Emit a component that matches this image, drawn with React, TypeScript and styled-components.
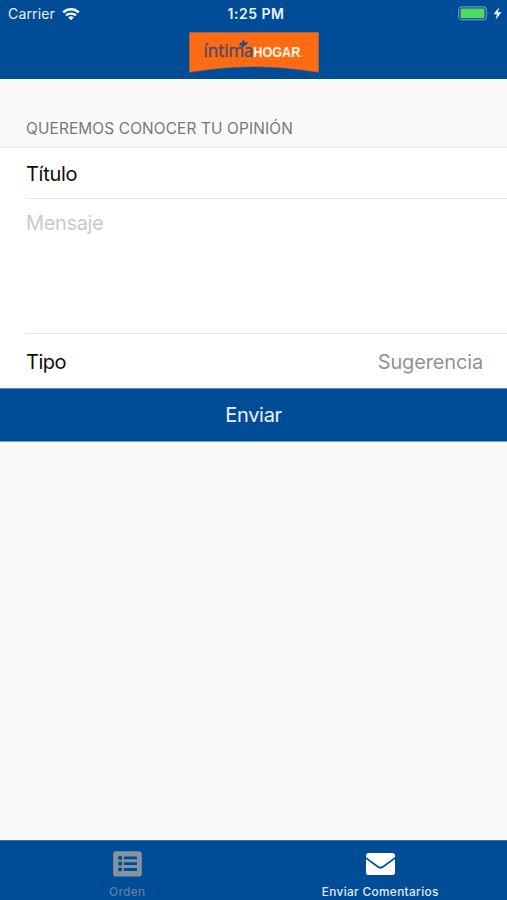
import React from "react";
import styled, { createGlobalStyle } from "styled-components";

const BLUE = "#004c97";

const GlobalStyle = createGlobalStyle`
  *, *::before, *::after { box-sizing: border-box; }
  body {
    margin: 0;
    background: #fafafa;
    font-family: Inter, "Liberation Sans", sans-serif;
    -webkit-font-smoothing: antialiased;
  }
`;

const Screen = styled.div`
  width: 100%;
  height: 900px;
  display: flex;
  flex-direction: column;
  overflow: hidden;
  background: #fafafa;
`;

const Header = styled.header`
  height: 79px;
  flex: none;
  background: ${BLUE};
`;

const StatusBar = styled.div`
  display: grid;
  grid-template-columns: 1fr auto 1fr;
  align-items: center;
  height: 28px;
  padding: 0 5px 0 8px;
  color: #e9f2fc;
  font-size: 14px;
  line-height: 28px;
`;

const Carrier = styled.div`
  display: flex;
  align-items: center;
  gap: 7px;
  letter-spacing: 0.15px;

  svg { margin-top: -1px; }
`;

const Clock = styled.div`
  font-weight: 600;
  letter-spacing: 0.5px;
  padding-left: 2px;
`;

const Power = styled.div`
  display: flex;
  align-items: center;
  justify-content: flex-end;
  gap: 3px;

  svg { margin-top: -2px; }
`;

const LogoRow = styled.div`
  display: flex;
  justify-content: center;
  padding: 4px 0 0 1px;

  svg { display: block; }
`;

const SectionTitle = styled.h2`
  flex: none;
  height: 69px;
  margin: 0;
  padding: 40px 26px 0;
  border-bottom: 1px solid #e9e9ea;
  color: #77777a;
  font-size: 15.4px;
  font-weight: 400;
  line-height: 20px;
  letter-spacing: 0.14px;
`;

const Form = styled.form`
  flex: none;
  background: #fff;
`;

const Row = styled.div<{ $height: number; $last?: boolean }>`
  display: flex;
  justify-content: space-between;
  align-items: center;
  height: ${(p) => p.$height}px;
  margin-left: 26px;
  padding: 2px 24px 0 0;
  border-bottom: ${(p) => (p.$last ? "0" : "1px solid #e6e6e7")};
  font-size: 20px;
  line-height: 26px;
`;

const Label = styled.span<{ $tracking: number }>`
  color: #0c0c0c;
  letter-spacing: ${(p) => p.$tracking}px;
`;

const Value = styled.span`
  color: #929295;
  letter-spacing: -0.15px;
`;

const Message = styled(Row)`
  align-items: flex-start;
  padding-top: 11px;
`;

const Placeholder = styled.span`
  color: #c9c9cc;
  letter-spacing: -0.35px;
`;

const Submit = styled.button`
  display: block;
  width: 100%;
  height: 54px;
  padding: 0;
  border: 0;
  border-top: 1px solid #5a8bbc;
  border-bottom: 1px solid #7ba2ca;
  background: ${BLUE};
  color: #eaf3fd;
  font: 400 20px/52px Inter, "Liberation Sans", sans-serif;
  letter-spacing: -0.3px;
`;

const TabBar = styled.nav`
  display: grid;
  grid-template-columns: 1fr 1fr;
  flex: none;
  height: 60px;
  margin-top: auto;
  border-top: 1px solid #3b6f9f;
  background: ${BLUE};
`;

const Tab = styled.div<{ $active?: boolean }>`
  display: flex;
  flex-direction: column;
  align-items: center;
  padding: 10px 0 0 ${(p) => (p.$active ? 0 : 1)}px;
  color: ${(p) => (p.$active ? "#fff" : "#8592a0")};

  svg { display: block; }
`;

const TabLabel = styled.span<{ $active?: boolean }>`
  margin-top: 7px;
  color: ${(p) => (p.$active ? "#e1edf9" : "#617f9d")};
  font-size: 11.8px;
  font-weight: 500;
  line-height: 16px;
  letter-spacing: 0.36px;
`;

const WifiIcon = () => (
  <svg width="18" height="14" viewBox="0 0 18 14" fill="none" stroke="#f4f9ff">
    <path d="M1.2 5.3C5.7 1.1 12.3 1.1 16.8 5.3" strokeWidth="2.5" />
    <path d="M3.9 8.4C6.7 5.9 11.3 5.9 14.1 8.4" strokeWidth="2.3" />
    <path d="M6.2 10.4C7.7 8.9 10.3 8.9 11.8 10.4L9 13.2Z" fill="#f4f9ff" stroke="none" />
  </svg>
);

const BatteryIcon = () => (
  <svg width="32" height="15" viewBox="0 0 32 15">
    <rect x="0.7" y="0.9" width="27.6" height="13" rx="3.2" fill="none" stroke="#6b97c3" strokeWidth="1.1" />
    <rect x="2.5" y="2.6" width="24" height="9.6" rx="1.3" fill="#4cd964" />
    <path d="M29.8 5.2Q31.5 7.4 29.8 9.6Z" fill="#6b97c3" />
  </svg>
);

const BoltIcon = () => (
  <svg width="9" height="13" viewBox="0 0 9 13">
    <path d="M6.1 0.3L0.5 7.3H3.9L2.6 12.7L8.5 5.3H5Z" fill="#f1f7ff" />
  </svg>
);

const Logo = () => (
  <svg width="130" height="41" viewBox="0 0 130 41">
    <path d="M0.3 0.3H129.7V40.3Q65 29 0.3 40.3Z" fill="#ff6b13" stroke="#8c6668" strokeWidth="0.6" />
    <text x="14.5" y="25" textLength="50" lengthAdjust="spacingAndGlyphs" fontFamily="Open Sans, sans-serif" fontSize="18" fill="#4f4c66" stroke="#4f4c66" strokeWidth="0.45">
      íntima
    </text>
    <path d="M54.3 7.6L55.6 10.4L58.6 10.2L57.2 12.8L55.2 13.6L53.6 16L52.7 13.4L50 13.1L51.6 10.8L53.6 10.2Z" fill="#204e87" stroke="#204e87" strokeWidth="0.5" />
    <text x="64.3" y="25" textLength="47" lengthAdjust="spacingAndGlyphs" fontFamily="Liberation Sans, sans-serif" fontWeight="700" fontSize="14" fill="#fff4e9">
      HOGAR
    </text>
    <circle cx="112.7" cy="24.1" r="0.9" fill="#ffd0ad" />
  </svg>
);

const ListIcon = () => (
  <svg width="29" height="26" viewBox="0 0 29 26">
    <rect x="0.2" y="0.2" width="28.6" height="25.4" rx="2.8" fill="currentColor" />
    <g fill={BLUE}>
      {[5.3, 11.1, 16.9].map((y) => (
        <React.Fragment key={y}>
          <circle cx="7.1" cy={y + 1.6} r="2.1" />
          <rect x="10.9" y={y + 0.2} width="13.1" height="2.8" rx="0.5" />
        </React.Fragment>
      ))}
    </g>
  </svg>
);

const MailIcon = () => (
  <svg width="29" height="26" viewBox="0 0 29 26">
    <path d="M2.8 2H26.2Q29 2 29 4.8V5.9L16.6 15.1Q14.5 16.6 12.4 15.1L0 5.9V4.8Q0 2 2.8 2Z" fill="currentColor" />
    <path d="M0 8.1L11.4 16.6Q14.5 18.9 17.6 16.6L29 8.1V21.2Q29 24 26.2 24H2.8Q0 24 0 21.2Z" fill="currentColor" />
  </svg>
);

export default function App() {
  return (
    <Screen>
      <GlobalStyle />
      <Header>
        <StatusBar>
          <Carrier>
            Carrier
            <WifiIcon />
          </Carrier>
          <Clock>1:25 PM</Clock>
          <Power>
            <BatteryIcon />
            <BoltIcon />
          </Power>
        </StatusBar>
        <LogoRow>
          <Logo />
        </LogoRow>
      </Header>
      <SectionTitle>QUEREMOS CONOCER TU OPINIÓN</SectionTitle>
      <Form>
        <Row $height={51}>
          <Label $tracking={-0.3}>Título</Label>
        </Row>
        <Message $height={135}>
          <Placeholder>Mensaje</Placeholder>
        </Message>
        <Row $height={54} $last>
          <Label $tracking={-0.5}>Tipo</Label>
          <Value>Sugerencia</Value>
        </Row>
        <Submit type="button">Enviar</Submit>
      </Form>
      <TabBar>
        <Tab>
          <ListIcon />
          <TabLabel>Orden</TabLabel>
        </Tab>
        <Tab $active>
          <MailIcon />
          <TabLabel $active>Enviar Comentarios</TabLabel>
        </Tab>
      </TabBar>
    </Screen>
  );
}
